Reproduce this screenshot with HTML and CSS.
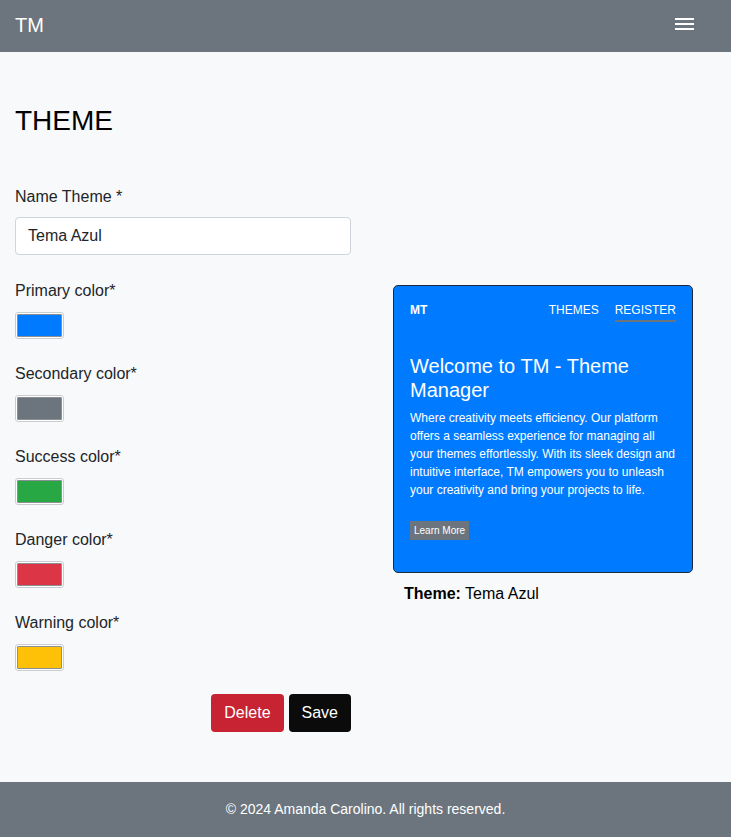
FILE: index.html
```html
<!DOCTYPE html>
<html lang="en">
<head>
<meta charset="utf-8">
<title>TM - Theme</title>
<link rel="stylesheet" href="styles.css">
</head>
<body>
<header class="navbar">
  <span class="brand">TM</span>
  <svg class="toggler" width="20" height="12" viewBox="0 0 20 12" aria-label="menu">
    <rect x="0" y="0" width="19" height="2" fill="#fff"/>
    <rect x="0" y="5" width="19" height="2" fill="#fff"/>
    <rect x="0" y="10" width="19" height="2" fill="#fff"/>
  </svg>
</header>
<main class="main">
  <h1 class="title">THEME</h1>
  <div class="row">
    <form class="form">
      <div class="group group-name">
        <label class="label" for="name">Name Theme *</label>
        <input class="text-input" id="name" type="text" value="Tema Azul">
      </div>
      <div class="group">
        <label class="label">Primary color*</label>
        <input class="color-input" type="color" value="#007bff">
      </div>
      <div class="group">
        <label class="label">Secondary color*</label>
        <input class="color-input" type="color" value="#6c757d">
      </div>
      <div class="group">
        <label class="label">Success color*</label>
        <input class="color-input" type="color" value="#28a745">
      </div>
      <div class="group">
        <label class="label">Danger color*</label>
        <input class="color-input" type="color" value="#dc3545">
      </div>
      <div class="group">
        <label class="label">Warning color*</label>
        <input class="color-input" type="color" value="#ffc107">
      </div>
      <div class="actions">
        <button type="button" class="btn btn-delete">Delete</button>
        <button type="button" class="btn btn-save">Save</button>
      </div>
    </form>
    <section class="preview">
      <div class="card">
        <nav class="card-nav">
          <span class="card-brand">MT</span>
          <span class="card-links">
            <span class="card-link">THEMES</span>
            <span class="card-link active">REGISTER</span>
          </span>
        </nav>
        <h2 class="card-title">Welcome to TM - Theme Manager</h2>
        <p class="card-text">Where creativity meets efficiency. Our platform offers a seamless experience for managing all your themes effortlessly. With its sleek design and intuitive interface, TM empowers you to unleash your creativity and bring your projects to life.</p>
        <span class="learn">Learn More</span>
      </div>
      <p class="theme-name"><strong>Theme:</strong> Tema Azul</p>
    </section>
  </div>
</main>
<footer class="footer">© 2024 Amanda Carolino. All rights reserved.</footer>
</body>
</html>
```

FILE: styles.css
```css
* { box-sizing: border-box; }
html, body { margin: 0; padding: 0; }
body {
  font-family: "Liberation Sans", Arial, sans-serif;
  font-size: 16px;
  line-height: 1.5;
  color: #212529;
  background: #f8f9fa;
}
.navbar {
  height: 52px;
  background: #6c757d;
  display: flex;
  justify-content: space-between;
  align-items: flex-start;
  padding: 0 36px 0 15px;
}
.brand {
  color: #fff;
  font-size: 20px;
  line-height: 50px;
}
.toggler { margin-top: 18px; display: block; }
.main { padding: 0 15px 50px; }
.title {
  margin: 0;
  padding-top: 52px;
  font-size: 28px;
  font-weight: 400;
  line-height: 1.2;
  color: #000;
}
.row {
  display: grid;
  grid-template-columns: 336px 1fr;
  margin-top: 47px;
}
.form { display: flex; flex-direction: column; }
.group { display: flex; flex-direction: column; align-items: flex-start; margin-bottom: 23px; }
.group-name { margin-bottom: 24px; }
.label { display: block; margin-bottom: 9px; }
.group-name .label { margin-bottom: 8px; }
.text-input {
  width: 100%;
  height: 38px;
  padding: 6px 12px;
  font: inherit;
  color: #212529;
  background: #fff;
  border: 1px solid #ced4da;
  border-radius: 4px;
}
.color-input {
  -webkit-appearance: none;
  appearance: none;
  display: block;
  width: 49px;
  height: 27px;
  margin: 0;
  padding: 0;
  background: #fff;
  border: 1px solid #c9cdd1;
  border-radius: 3px;
  cursor: pointer;
}
.color-input::-webkit-color-swatch-wrapper { padding: 1px 1px; }
.color-input::-webkit-color-swatch { border: 1px solid #8a8f94; border-radius: 1px; }
.actions {
  display: flex;
  justify-content: flex-end;
  gap: 5px;
}
.btn {
  font: inherit;
  color: #fff;
  border: 1px solid transparent;
  border-radius: 4px;
  padding: 6px 12px;
  line-height: 24px;
}
.btn-delete { background: #c82333; }
.btn-save { background: #0b0b0b; }
.preview { padding-top: 100px; padding-left: 42px; }
.card {
  width: 300px;
  height: 288px;
  background: #007bff;
  border: 1px solid #1d2b3a;
  border-radius: 5px;
  padding: 16px;
  color: #fff;
}
.card-nav {
  display: flex;
  justify-content: space-between;
  font-size: 12px;
  line-height: 16px;
}
.card-brand { font-weight: 700; }
.card-links { display: flex; gap: 16px; }
.card-link { padding-bottom: 2px; border-bottom: 2px solid transparent; }
.card-link.active { border-bottom-color: #6c757d; }
.card-title {
  margin: 32px 0 7px;
  font-size: 20px;
  font-weight: 400;
  line-height: 24px;
}
.card-text {
  margin: 0 0 18px;
  font-size: 12px;
  line-height: 18px;
}
.learn {
  display: inline-block;
  background: #6c757d;
  font-size: 10px;
  line-height: 19px;
  padding: 0 4px;
}
.theme-name { margin: 9px 0 0 11px; color: #000; }
.footer {
  background: #6c757d;
  color: #fff;
  text-align: center;
  font-size: 14px;
  line-height: 21px;
  padding: 17px 0;
}
```
